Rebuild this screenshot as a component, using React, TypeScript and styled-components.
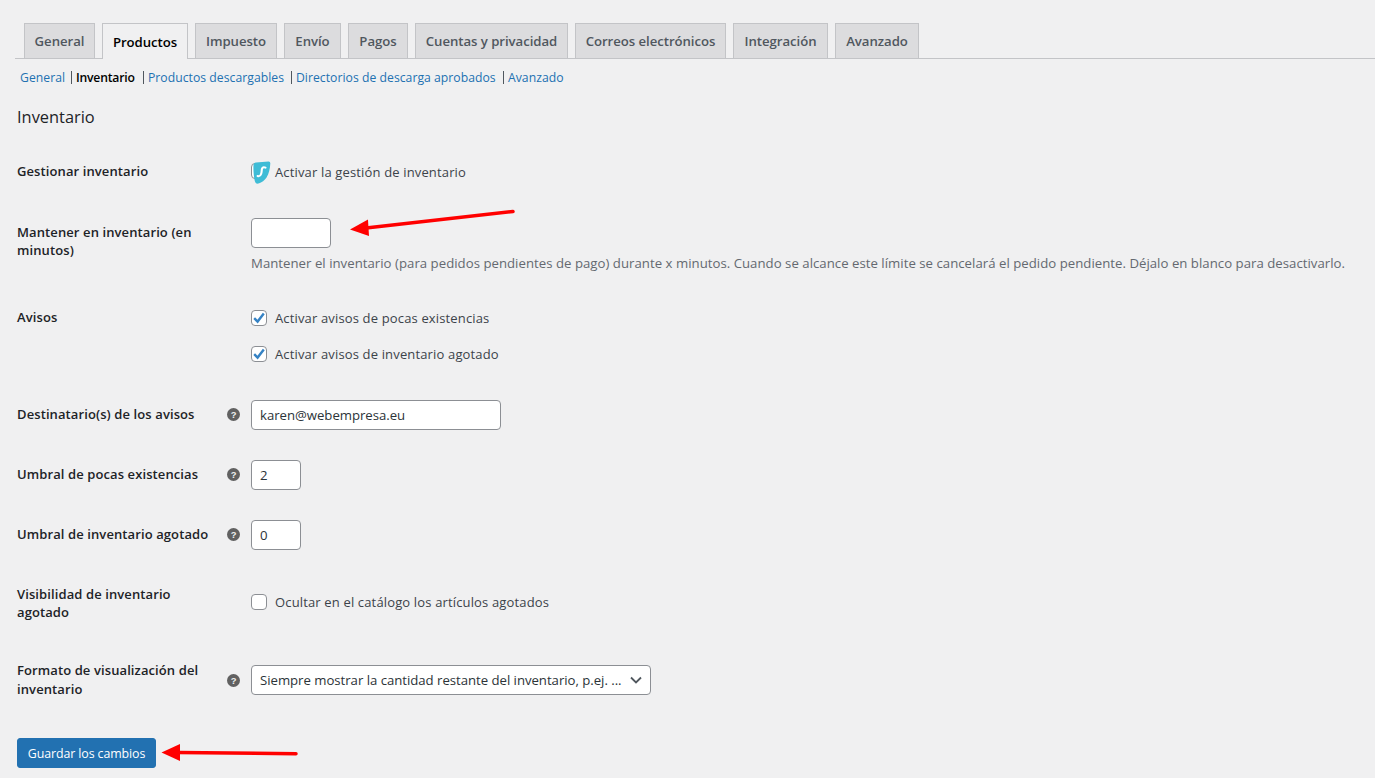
import React from "react";
import styled, { createGlobalStyle } from "styled-components";

const Global = createGlobalStyle`
  html, body { margin: 0; padding: 0; background: #f0f0f1; }
  body { font-family: "Open Sans", "Noto Sans", sans-serif; font-size: 13px; color: #3c434a; overflow: hidden; }
`;

const Page = styled.div`
  position: relative;
  width: 1375px;
  height: 778px;
  overflow: hidden;
  box-sizing: border-box;
  padding-top: 23px;
`;

const TabBar = styled.nav`
  display: flex;
  gap: 7px;
  height: 35px;
  margin-left: 15px;
  padding-left: 9px;
  border-bottom: 1px solid #c3c4c7;
`;

const Tab = styled.a<{ $active?: boolean; $w: number }>`
  box-sizing: border-box;
  width: ${(p) => p.$w}px;
  height: ${(p) => (p.$active ? 36 : 35)}px;
  display: flex;
  align-items: center;
  justify-content: center;
  border: 1px solid #c3c4c7;
  border-bottom: ${(p) => (p.$active ? "none" : "0")};
  background: ${(p) => (p.$active ? "#f0f0f1" : "#dcdcde")};
  color: ${(p) => (p.$active ? "#000" : "#50575e")};
  font-size: 13.2px;
  font-weight: 600;
  letter-spacing: -0.05px;
  white-space: nowrap;
`;

const SubNav = styled.div`
  display: flex;
  height: 18px;
  margin: 9px 0 0 20px;
  align-items: center;
  font-size: 12.2px;
  color: #2271b1;
  white-space: nowrap;
`;

const SubLink = styled.a<{ $current?: boolean; $w: number }>`
  width: ${(p) => p.$w}px;
  color: ${(p) => (p.$current ? "#000" : "#2271b1")};
  font-weight: ${(p) => (p.$current ? 600 : 400)};
  letter-spacing: ${(p) => (p.$current ? "-0.2px" : "0.03px")};
  flex: none;
`;

const Sep = styled.span`
  width: 1px;
  height: 13px;
  margin-right: 4px;
  flex: none;
  background: #50575e;
`;

const Title = styled.h2`
  margin: 19px 0 0 17px;
  height: 24px;
  line-height: 24px;
  font-size: 16.4px;
  font-weight: 400;
  color: #1d2327;
`;

const Row = styled.div<{ $top: number; $h: number }>`
  display: grid;
  grid-template-columns: 234px 1fr;
  margin: ${(p) => p.$top}px 0 0 17px;
  height: ${(p) => p.$h}px;
  align-items: center;
`;

const TopRow = styled(Row)`
  align-items: start;
`;

const LabelCell = styled.div`
  display: flex;
  align-items: center;
  justify-content: space-between;
  padding-right: 11px;
`;

const RaisedLabelCell = styled(LabelCell)`
  padding-bottom: 2px;
`;

const OffsetLabelCell = styled(LabelCell)`
  padding-top: 5px;
`;

const Label = styled.label<{ $w?: number; $tight?: boolean }>`
  font-size: 13px;
  line-height: ${(p) => (p.$tight ? 18 : 18.5)}px;
  font-weight: 600;
  color: #1d2327;
  letter-spacing: 0.1px;
  ${(p) => (p.$w ? `width: ${p.$w}px;` : "")}
`;

const Help = styled.svg<{ $nudge?: boolean }>`
  width: 13px;
  height: 13px;
  flex: none;
  margin-top: ${(p) => (p.$nudge ? 2 : 0)}px;
`;

const Field = styled.div`
  display: flex;
  flex-direction: column;
`;

const Check = styled.div`
  display: flex;
  align-items: center;
  gap: 8px;
  height: 20px;
  font-size: 13px;
  letter-spacing: 0.15px;
  color: #3c434a;
  white-space: nowrap;
`;

const RaisedCell = styled.div`
  padding-bottom: 2px;
`;

const Box = styled.span`
  box-sizing: border-box;
  width: 16px;
  height: 16px;
  border: 1px solid #8c8f94;
  border-radius: 4px;
  background: #fff;
  display: flex;
  align-items: center;
  justify-content: center;
  flex: none;
`;

const CheckStack = styled.div`
  display: flex;
  flex-direction: column;
  gap: 16px;
`;

const Input = styled.div<{ $w: number }>`
  box-sizing: border-box;
  width: ${(p) => p.$w}px;
  height: 30px;
  padding: 0 8px;
  display: flex;
  align-items: center;
  background: #fff;
  border: 1px solid #8c8f94;
  border-radius: 4px;
  color: #2c3338;
  font-size: 13.2px;
  letter-spacing: -0.03px;
  white-space: nowrap;
`;

const SelectBox = styled(Input)`
  justify-content: space-between;
  padding-right: 7px;
`;

const Chevron = styled.svg`
  width: 14px;
  height: 14px;
  flex: none;
`;

const Desc = styled.p`
  margin: 6px 0 0;
  height: 18px;
  line-height: 18px;
  font-size: 13.2px;
  letter-spacing: 0.025px;
  color: #646970;
  white-space: nowrap;
`;

const Save = styled.button`
  display: block;
  box-sizing: border-box;
  width: 139px;
  height: 30px;
  margin: 40px 0 0 17px;
  padding: 0;
  background: #2271b1;
  border: 1px solid #2271b1;
  border-radius: 3px;
  color: #fff;
  font-family: inherit;
  font-size: 12.4px;
  letter-spacing: -0.1px;
`;

const Arrows = styled.svg`
  position: absolute;
  left: 0;
  top: 0;
  pointer-events: none;
`;

const LogoMark = styled.svg`
  width: 20px;
  height: 23px;
  flex: none;
  margin-right: 4px;
`;

const LogoCheck = styled(Check)`
  gap: 0;
  margin-top: 2px;
`;

const tabs: [string, number][] = [
  ["General", 71], ["Productos", 86], ["Impuesto", 82], ["Envío", 57], ["Pagos", 60],
  ["Cuentas y privacidad", 153], ["Correos electrónicos", 151], ["Integración", 95], ["Avanzado", 84],
];

const HelpIcon = ({ nudge }: { nudge?: boolean }) => (
  <Help viewBox="0 0 20 20" $nudge={nudge}>
    <circle cx="10" cy="10" r="10" fill="#616161" />
    <text x="10" y="15" textAnchor="middle" fontSize="14.5" fontWeight="700" fontFamily="Liberation Sans, sans-serif" fill="#f0f0f1">?</text>
  </Help>
);

const Tick = () => (
  <svg width="14" height="14" viewBox="0 0 14 14">
    <path d="M2.2 7.2 5.6 10.6 11.8 2.6" fill="none" stroke="#3582c4" strokeWidth="2.4" />
  </svg>
);

const CheckItem = ({ on, children }: { on?: boolean; children: React.ReactNode }) => (
  <Check><Box>{on && <Tick />}</Box>{children}</Check>
);

export default function App() {
  return (
    <Page>
      <Global />
      <TabBar>
        {tabs.map(([t, w]) => <Tab key={t} $w={w} $active={t === "Productos"}>{t}</Tab>)}
      </TabBar>
      <SubNav>
        <SubLink $w={51}>General</SubLink><Sep />
        <SubLink $current $w={67}>Inventario</SubLink><Sep />
        <SubLink $w={143}>Productos descargables</SubLink><Sep />
        <SubLink $w={207}>Directorios de descarga aprobados</SubLink><Sep />
        <SubLink $w={60}>Avanzado</SubLink>
      </SubNav>
      <Title>Inventario</Title>

      <Row $top={30} $h={24}>
        <LabelCell><Label>Gestionar inventario</Label></LabelCell>
        <Field>
          <LogoCheck>
            <LogoMark viewBox="0 0 20 23">
              <rect x="0.5" y="2.500" width="15" height="15" rx="3.500" fill="#fff" stroke="#8c8f94" />
              <path d="M5 1.500 17.500.6Q19.500.5 19.300 2.500C19 8 18 12.500 15.500 16.500 13.500 19.500 11 21.500 7.500 22.500 5.500 23 4.300 22 3.800 20 2.700 15.500 2.200 9 2.500 4 2.600 2.500 3.500 1.600 5 1.500Z" fill="#3fbcd6" />
              <path d="M14.500 6.600C12.500 5.800 11.200 6.500 10.900 8 10.600 9.700 10.800 11 10.100 13 9.500 14.800 8.200 15.500 6.600 15.100" fill="none" stroke="#fff" strokeWidth="2.100" strokeLinecap="round" />
            </LogoMark>
            Activar la gestión de inventario
          </LogoCheck>
        </Field>
      </Row>

      <TopRow $top={35} $h={90}>
        <OffsetLabelCell><Label $w={190} $tight>Mantener en inventario (en minutos)</Label></OffsetLabelCell>
        <Field>
          <Input $w={80} />
          <Desc>Mantener el inventario (para pedidos pendientes de pago) durante x minutos. Cuando se alcance este límite se cancelará el pedido pendiente. Déjalo en blanco para desactivarlo.</Desc>
        </Field>
      </TopRow>

      <TopRow $top={0} $h={56}>
        <LabelCell><Label>Avisos</Label></LabelCell>
        <CheckStack>
          <CheckItem on>Activar avisos de pocas existencias</CheckItem>
          <CheckItem on>Activar avisos de inventario agotado</CheckItem>
        </CheckStack>
      </TopRow>

      <Row $top={36} $h={30}>
        <RaisedLabelCell><Label>Destinatario(s) de los avisos</Label><HelpIcon /></RaisedLabelCell>
        <Input $w={250}>karen@webempresa.eu</Input>
      </Row>

      <Row $top={30} $h={30}>
        <RaisedLabelCell><Label>Umbral de pocas existencias</Label><HelpIcon /></RaisedLabelCell>
        <Input $w={50}>2</Input>
      </Row>

      <Row $top={30} $h={30}>
        <RaisedLabelCell><Label>Umbral de inventario agotado</Label><HelpIcon /></RaisedLabelCell>
        <Input $w={50}>0</Input>
      </Row>

      <Row $top={34} $h={37}>
        <LabelCell><Label $w={190} $tight>Visibilidad de inventario agotado</Label></LabelCell>
        <RaisedCell><CheckItem>Ocultar en el catálogo los artículos agotados</CheckItem></RaisedCell>
      </Row>

      <Row $top={40} $h={37}>
        <LabelCell><Label $w={190}>Formato de visualización del inventario</Label><HelpIcon nudge /></LabelCell>
        <SelectBox $w={400}>
          Siempre mostrar la cantidad restante del inventario, p.ej. ...
          <Chevron viewBox="0 0 14 14"><path d="M2 4.500 7 9.500 12 4.500" fill="none" stroke="#50575e" strokeWidth="1.800" /></Chevron>
        </SelectBox>
      </Row>

      <Save>Guardar los cambios</Save>

      <Arrows width="1375" height="778" viewBox="0 0 1375 778">
        <path d="M513 211.500 366 228" stroke="#f00" strokeWidth="3.500" strokeLinecap="round" fill="none" />
        <path d="M350 229.500 368 219.500 369 236Z" fill="#f00" />
        <path d="M296 753.800 178 752.500" stroke="#f00" strokeWidth="3.500" strokeLinecap="round" fill="none" />
        <path d="M161.500 752.500 180 744 180 761Z" fill="#f00" />
      </Arrows>
    </Page>
  );
}
